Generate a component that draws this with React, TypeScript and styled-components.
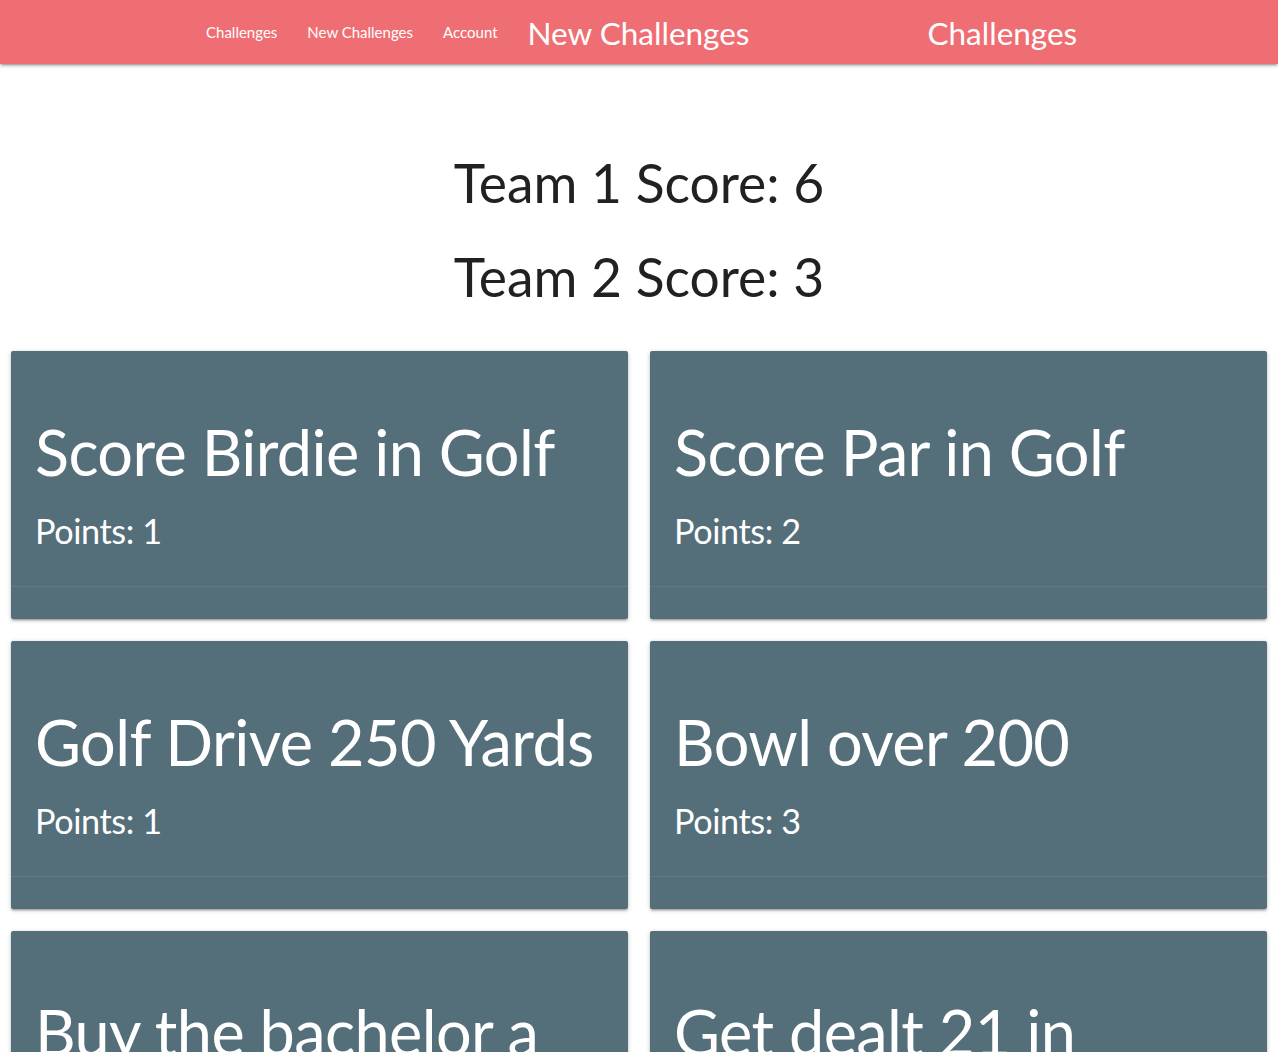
import React from "react";
import styled, { createGlobalStyle } from "styled-components";

const Global = createGlobalStyle`
  html, body { margin: 0; padding: 0; background: #fff; }
  body { font-family: Lato, "Open Sans", sans-serif; color: rgba(0,0,0,0.87); }
  * { box-sizing: border-box; }
`;

const Nav = styled.nav`
  height: 64px;
  background: #ef6e73;
  box-shadow: 0 2px 2px 0 rgba(0,0,0,.14), 0 3px 1px -2px rgba(0,0,0,.12), 0 1px 5px 0 rgba(0,0,0,.2);
  display: flex;
  align-items: center;
  padding-left: 191px;
  color: #fff;
`;

const NavLink = styled.a`
  font-size: 15px;
  padding: 0 15px;
  line-height: 64px;
  color: #fff;
  text-decoration: none;
`;

const Brand = styled.a<{ $ml?: number }>`
  font-size: 31.5px;
  line-height: 64px;
  color: #fff;
  text-decoration: none;
  margin-left: ${(p) => p.$ml ?? 0}px;
  padding-top: 2px;
`;

const Scores = styled.section`
  padding-top: 89px;
  text-align: center;
`;

const ScoreLine = styled.h2`
  font-size: 53.4px;
  font-weight: 400;
  line-height: 110%;
  margin: 0 0 35.6px;
  &:last-child { margin-bottom: 0; }
`;

const Grid = styled.div`
  display: grid;
  grid-template-columns: 1fr 1fr;
  column-gap: 22px;
  row-gap: 22px;
  padding: 45px 11px 0;
`;

const Card = styled.div`
  background: #546e7a;
  border-radius: 2px;
  box-shadow: 0 2px 2px 0 rgba(0,0,0,.14), 0 3px 1px -2px rgba(0,0,0,.12), 0 1px 5px 0 rgba(0,0,0,.2);
  color: #fff;
`;

const CardContent = styled.div`
  padding: 66px 24px 24px;
`;

const CardTitle = styled.h1`
  font-size: 63px;
  font-weight: 400;
  line-height: 110%;
  letter-spacing: -0.6px;
  margin: 0 0 25.2px;
`;

const Points = styled.h4`
  font-size: 34.2px;
  font-weight: 400;
  line-height: 110%;
  letter-spacing: -0.4px;
  margin: 0 0 13px;
`;

const CardAction = styled.div`
  border-top: 1px solid rgba(160,160,160,0.2);
  padding: 16px 24px;
`;

const challenges = [
  { title: "Score Birdie in Golf", points: 1 },
  { title: "Score Par in Golf", points: 2 },
  { title: "Golf Drive 250 Yards", points: 1 },
  { title: "Bowl over 200", points: 3 },
  { title: "Buy the bachelor a drink", points: 1 },
  { title: "Get dealt 21 in Blackjack", points: 2 },
];

export default function App() {
  return (
    <>
      <Global />
      <Nav>
        <NavLink href="#">Challenges</NavLink>
        <NavLink href="#">New Challenges</NavLink>
        <NavLink href="#">Account</NavLink>
        <Brand href="#" $ml={15}>New Challenges</Brand>
        <Brand href="#" $ml={178}>Challenges</Brand>
      </Nav>
      <Scores>
        <ScoreLine>Team 1 Score: 6</ScoreLine>
        <ScoreLine>Team 2 Score: 3</ScoreLine>
      </Scores>
      <Grid>
        {challenges.map((c) => (
          <Card key={c.title}>
            <CardContent>
              <CardTitle>{c.title}</CardTitle>
              <Points>Points: {c.points}</Points>
            </CardContent>
            <CardAction />
          </Card>
        ))}
      </Grid>
    </>
  );
}
